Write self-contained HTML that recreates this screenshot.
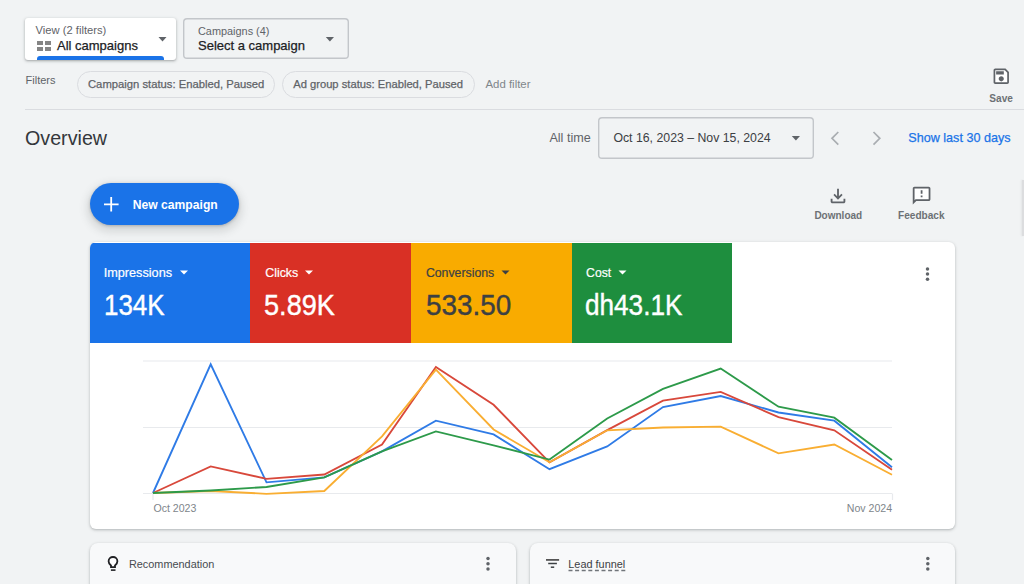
<!DOCTYPE html>
<html><head><meta charset="utf-8">
<style>
html,body{margin:0;padding:0;}
body{width:1024px;height:584px;overflow:hidden;background:#f1f3f4;position:relative;font-family:"Liberation Sans",sans-serif;}
.a{position:absolute;white-space:nowrap;line-height:1;}
.g{color:#5f6368;}
.d{color:#202124;}
.med{-webkit-text-stroke:0.25px currentColor;}
svg{position:absolute;overflow:visible;}
</style></head><body>

<!-- View box -->
<div class="a" style="left:25px;top:18px;width:151px;height:42px;background:#fff;border-radius:3px;box-shadow:0 1px 2px rgba(60,64,67,.3),0 1px 3px 1px rgba(60,64,67,.12);overflow:hidden">
  <div style="position:absolute;left:12px;top:38.2px;width:127px;height:5px;background:#1a73e8;border-radius:3px 3px 0 0"></div>
</div>
<div class="a g" style="left:35.6px;top:24.7px;font-size:11.2px;">View (2 filters)</div>
<div class="a" style="left:36.5px;top:41px;width:6.5px;height:4.3px;background:#858585"></div>
<div class="a" style="left:44.5px;top:41px;width:6.5px;height:4.3px;background:#858585"></div>
<div class="a" style="left:36.5px;top:46.8px;width:6.5px;height:4.3px;background:#858585"></div>
<div class="a" style="left:44.5px;top:46.8px;width:6.5px;height:4.3px;background:#858585"></div>
<div class="a d med" style="left:57px;top:38.7px;font-size:13px;">All campaigns</div>
<svg style="left:0;top:0" width="1" height="1"><polygon points="158.5,37 166.5,37 162.5,41.4" fill="#5f6368"/></svg>

<!-- Campaigns box -->
<div class="a" style="left:183px;top:17.6px;width:165.6px;height:41.6px;box-shadow:inset 0 0 0 1.4px #c3c6ca;border-radius:4px;"></div>
<div class="a g" style="left:198px;top:26.1px;font-size:10.9px;">Campaigns (4)</div>
<div class="a d med" style="left:198px;top:38.6px;font-size:13px;">Select a campaign</div>
<svg style="left:0;top:0" width="1" height="1"><polygon points="325.8,37 334,37 329.9,41.4" fill="#5f6368"/></svg>

<!-- Filters row -->
<div class="a g" style="left:25.6px;top:75px;font-size:11px;">Filters</div>
<div class="a" style="left:77px;top:71px;width:196px;height:25px;border:1px solid #dadce0;border-radius:14px;"></div>
<div class="a g med" style="left:88px;top:79.1px;font-size:11.25px;color:#5f6368">Campaign status: Enabled, Paused</div>
<div class="a" style="left:282px;top:71px;width:191px;height:25px;border:1px solid #dadce0;border-radius:14px;"></div>
<div class="a g med" style="left:293.2px;top:79.1px;font-size:11.2px;color:#5f6368">Ad group status: Enabled, Paused</div>
<div class="a" style="left:485.5px;top:78.5px;font-size:11.4px;color:#80868b">Add filter</div>

<!-- Save -->
<svg style="left:990.6px;top:66.4px" width="20.5" height="20.5" viewBox="0 0 24 24"><rect x="5" y="5" width="14" height="14" fill="#fff"/><path fill="#5f6368" d="M17 3H5c-1.11 0-2 .9-2 2v14c0 1.1.89 2 2 2h14c1.1 0 2-.9 2-2V7l-4-4zm2 16H5V5h11.17L19 7.83V19zm-7-7c-1.66 0-3 1.34-3 3s1.34 3 3 3 3-1.34 3-3-1.34-3-3-3zM6 6h9v4H6z"/></svg>
<div class="a" style="left:989.3px;top:93.6px;font-size:10.1px;font-weight:700;color:#6d7175">Save</div>

<!-- divider -->
<div class="a" style="left:25px;top:109px;width:999px;height:1px;background:#dadce0"></div>

<!-- Overview row -->
<div class="a" style="left:25px;top:129px;font-size:19.7px;color:#34373b">Overview</div>
<div class="a g" style="left:549.4px;top:132.1px;font-size:12.6px;">All time</div>
<div class="a" style="left:598.3px;top:117px;width:215.6px;height:41.6px;box-shadow:inset 0 0 0 1.4px #c3c6ca;border-radius:4px;"></div>
<div class="a" style="left:613.4px;top:132px;font-size:12.3px;color:#3c4043">Oct 16, 2023 – Nov 15, 2024</div>
<svg style="left:0;top:0" width="1" height="1"><polygon points="791.8,136 800,136 795.9,140.4" fill="#5f6368"/></svg>
<svg style="left:0;top:0" width="1" height="1"><polyline points="838.3,132 832,138.3 838.3,144.6" fill="none" stroke="#a9adb1" stroke-width="1.7"/></svg>
<svg style="left:0;top:0" width="1" height="1"><polyline points="873.5,132 879.8,138.3 873.5,144.6" fill="none" stroke="#a9adb1" stroke-width="1.7"/></svg>
<div class="a med" style="left:908.3px;top:131.7px;font-size:12.6px;color:#1a73e8">Show last 30 days</div>

<!-- New campaign -->
<div class="a" style="left:90px;top:183px;width:149px;height:42px;background:#1a73e8;border-radius:21px;box-shadow:0 1px 3px rgba(60,64,67,.3),0 4px 8px 3px rgba(60,64,67,.15)"></div>
<svg style="left:0;top:0" width="1" height="1"><path d="M111.2 197V211.6M104 204.4H118.6" stroke="#fff" stroke-width="1.8"/></svg>
<div class="a" style="left:132.8px;top:199.2px;font-size:12.14px;font-weight:700;color:#fff">New campaign</div>

<!-- Download / Feedback -->
<svg style="left:827.3px;top:185.3px" width="22" height="22" viewBox="0 0 24 24"><path fill="#5f6368" d="M12 16l-5-5 1.41-1.41L11 12.17V4h2v8.17l2.59-2.58L17 11l-5 5zm-6 4c-.55 0-1.02-.2-1.41-.59C4.2 19.02 4 18.55 4 18v-3h2v3h12v-3h2v3c0 .55-.2 1.02-.59 1.41-.39.39-.86.59-1.41.59H6z"/></svg>
<div class="a" style="left:814.4px;top:211.1px;font-size:10px;font-weight:700;color:#6d7175">Download</div>
<svg style="left:910.9px;top:185.2px" width="21.2" height="21.2" viewBox="0 0 24 24"><rect x="4" y="4" width="16" height="12" fill="#fff"/><path fill="#5f6368" d="M20 2H4c-1.1 0-1.99.9-1.99 2L2 22l4-4h14c1.1 0 2-.9 2-2V4c0-1.1-.9-2-2-2zm0 14H5.17L4 17.17V4h16v12zM11 12h2v2h-2zm0-6h2v4h-2z"/></svg>
<div class="a" style="left:898px;top:211.1px;font-size:10.1px;font-weight:700;color:#6d7175">Feedback</div>

<!-- right edge panel -->
<div class="a" style="left:1022px;top:180px;width:2px;height:56px;background:#dcdddf;box-shadow:-1px 0 2px rgba(60,64,67,.08)"></div>

<!-- Chart card -->
<div class="a" style="left:90px;top:242px;width:865px;height:287px;background:#fff;border-radius:6px;box-shadow:0 1px 2px rgba(60,64,67,.22),0 1px 3px 1px rgba(60,64,67,.1);overflow:hidden">
  <div style="position:absolute;left:0;top:1px;width:160px;height:100px;background:#1a73e8"></div>
  <div style="position:absolute;left:160px;top:1px;width:161px;height:100px;background:#d93025"></div>
  <div style="position:absolute;left:321px;top:1px;width:161px;height:100px;background:#f9ab00"></div>
  <div style="position:absolute;left:482px;top:1px;width:160px;height:100px;background:#1e8e3e"></div>
</div>
<div class="a" style="-webkit-text-stroke:0.2px currentColor;left:103.7px;top:266.5px;font-size:12.7px;color:#fff">Impressions</div>
<svg style="left:0;top:0" width="1" height="1"><polygon points="180,270.4 188,270.4 184,274.6" fill="#fff"/></svg>
<div class="a" style="left:103.8px;top:291.4px;font-size:29px;color:#fff;-webkit-text-stroke:0.4px #fff;transform-origin:0 0;transform:scaleX(0.895)">134K</div>
<div class="a" style="-webkit-text-stroke:0.2px currentColor;left:265.2px;top:266.5px;font-size:12.4px;color:#fff">Clicks</div>
<svg style="left:0;top:0" width="1" height="1"><polygon points="305,270.4 313,270.4 309,274.6" fill="#fff"/></svg>
<div class="a" style="left:264px;top:291.4px;font-size:29px;color:#fff;-webkit-text-stroke:0.4px #fff;transform-origin:0 0;transform:scaleX(0.936)">5.89K</div>
<div class="a" style="-webkit-text-stroke:0.2px currentColor;left:425.9px;top:266.5px;font-size:12.3px;color:#3c4043">Conversions</div>
<svg style="left:0;top:0" width="1" height="1"><polygon points="501.5,270.4 509.5,270.4 505.5,274.6" fill="#3c4043"/></svg>
<div class="a" style="left:425.8px;top:291.4px;font-size:29px;color:#3c4043;-webkit-text-stroke:0.4px #3c4043;transform-origin:0 0;transform:scaleX(0.96)">533.50</div>
<div class="a" style="-webkit-text-stroke:0.2px currentColor;left:586.1px;top:266.5px;font-size:12.2px;color:#fff">Cost</div>
<svg style="left:0;top:0" width="1" height="1"><polygon points="618.5,270.4 626.5,270.4 622.5,274.6" fill="#fff"/></svg>
<div class="a" style="left:585px;top:291.4px;font-size:29px;color:#fff;-webkit-text-stroke:0.4px #fff;transform-origin:0 0;transform:scaleX(0.9015)">dh43.1K</div>
<svg style="left:0;top:0" width="1" height="1"><circle cx="927.5" cy="269" r="1.75" fill="#5f6368"/><circle cx="927.5" cy="274.1" r="1.75" fill="#5f6368"/><circle cx="927.5" cy="279.3" r="1.75" fill="#5f6368"/></svg>

<!-- chart -->
<svg style="left:0;top:0" width="1" height="1">
  <g stroke="#e8eaed" stroke-width="1.2">
    <line x1="143" y1="361" x2="892" y2="361"/>
    <line x1="143" y1="427.5" x2="892" y2="427.5"/>
    <line x1="143" y1="493.5" x2="892" y2="493.5"/>
    <line x1="153" y1="493.5" x2="153" y2="500"/>
    <line x1="892.5" y1="493.5" x2="892.5" y2="500"/>
  </g>
  <g fill="none" stroke-width="1.85" stroke-linejoin="miter">
    <polyline stroke="#2f7be6" points="153.0,493 210.7,364.3 266.5,482.3 324.3,477.4 382.0,451.4 435.9,420.7 493.6,434.4 549.5,469.2 607.2,446.4 663.0,407 720.7,396 778.5,412.5 834.3,420.7 892.0,467.3"/>
    <polyline stroke="#d8483b" points="153.0,493 210.7,466.4 266.5,478.8 324.3,474.5 382.0,444.5 435.9,367 493.6,404.8 549.5,462.3 607.2,430.1 663.0,400.7 720.7,391.9 778.5,417.1 834.3,430.3 892.0,469.7"/>
    <polyline stroke="#f9ae32" points="153.0,493 210.7,491 266.5,493.8 324.3,491 382.0,436.3 435.9,369.7 493.6,429.5 549.5,462.3 607.2,430.3 663.0,427.5 720.7,426.7 778.5,453.3 834.3,444.5 892.0,474.7"/>
    <polyline stroke="#2d9a4a" points="153.0,493 210.7,490.5 266.5,487 324.3,477.4 382.0,451.4 435.9,431.4 493.6,445.3 549.5,459.6 607.2,418.5 663.0,388.9 720.7,368.6 778.5,406.7 834.3,417.7 892.0,460.1"/>
  </g>
</svg>
<div class="a" style="left:153.4px;top:502.5px;font-size:10.6px;color:#80868b">Oct 2023</div>
<div class="a" style="left:846.8px;top:502.5px;font-size:10.6px;color:#80868b">Nov 2024</div>

<!-- bottom cards -->
<div class="a" style="left:90px;top:543px;width:426px;height:60px;background:#f8f9fa;border-radius:8px;box-shadow:0 1px 2px rgba(60,64,67,.25),0 1px 3px 1px rgba(60,64,67,.1)"></div>
<svg style="left:0;top:0" width="1" height="1"><path d="M111 567.2V565.4C109.5 564.3 108.6 562.8 108.6 561.2C108.6 558.7 110.6 557 113 557C115.4 557 117.4 558.7 117.4 561.2C117.4 562.8 116.5 564.3 115 565.4V567.2Z" fill="#fff" stroke="#202124" stroke-width="1.8"/><line x1="110.9" y1="570.1" x2="115.5" y2="570.1" stroke="#202124" stroke-width="1.6"/></svg>
<div class="a" style="left:128.9px;top:558.9px;font-size:10.9px;color:#474b50">Recommendation</div>
<svg style="left:0;top:0" width="1" height="1"><circle cx="488" cy="558.5" r="1.75" fill="#5f6368"/><circle cx="488" cy="563.7" r="1.75" fill="#5f6368"/><circle cx="488" cy="568.9" r="1.75" fill="#5f6368"/></svg>

<div class="a" style="left:530px;top:543px;width:425px;height:60px;background:#f8f9fa;border-radius:8px;box-shadow:0 1px 2px rgba(60,64,67,.25),0 1px 3px 1px rgba(60,64,67,.1)"></div>
<svg style="left:0;top:0" width="1" height="1"><g stroke="#3c4043"><line x1="546" y1="559.9" x2="559.1" y2="559.9" stroke-width="1.8" stroke="#555"/><line x1="548.2" y1="563.5" x2="556.9" y2="563.5" stroke-width="1.5"/><line x1="550.8" y1="567.2" x2="554.2" y2="567.2" stroke-width="1.5"/></g></svg>
<div class="a" style="left:568.3px;top:558.9px;font-size:10.9px;color:#3c4043">Lead funnel</div><svg style="left:0;top:0" width="1" height="1"><line x1="568.5" y1="570.5" x2="626" y2="570.5" stroke="#70757a" stroke-width="1.4" stroke-dasharray="4 2.6"/></svg>
<svg style="left:0;top:0" width="1" height="1"><circle cx="927.8" cy="558.5" r="1.75" fill="#5f6368"/><circle cx="927.8" cy="563.75" r="1.75" fill="#5f6368"/><circle cx="927.8" cy="569" r="1.75" fill="#5f6368"/></svg>

</body></html>
